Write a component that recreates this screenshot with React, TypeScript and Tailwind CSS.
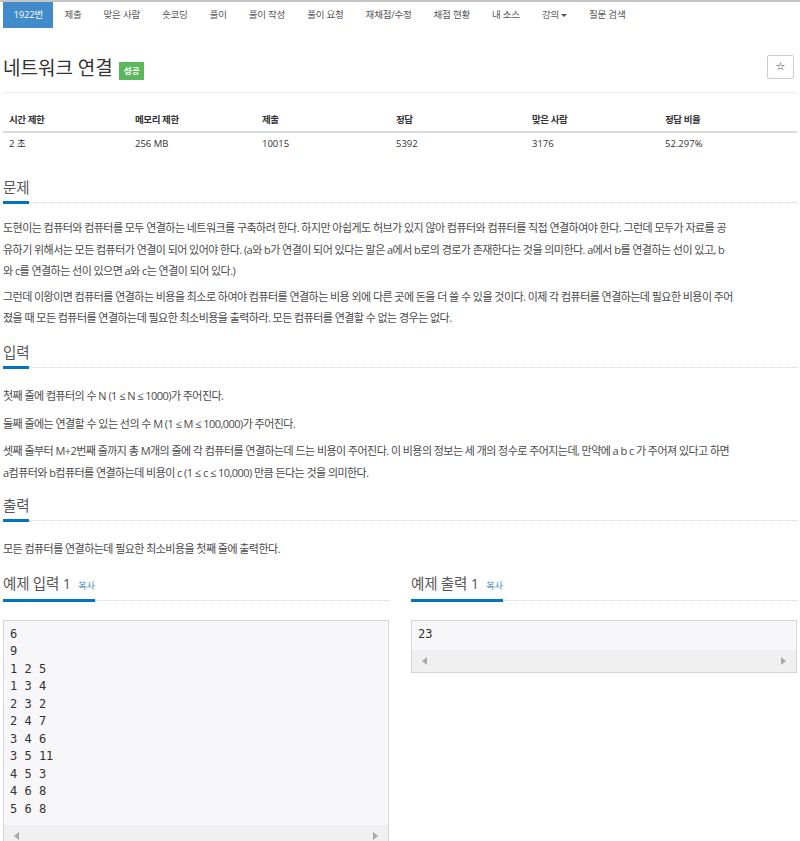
import type { ReactNode } from "react";

const navItems = ["제출", "맞은 사람", "숏코딩", "풀이", "풀이 작성", "풀이 요청", "재채점/수정", "채점 현황", "내 소스", "강의", "질문 검색"];

const stats = [
  { label: "시간 제한", value: "2 초", w: "w-[126px]" },
  { label: "메모리 제한", value: "256 MB", w: "w-[127px]" },
  { label: "제출", value: "10015", w: "w-[134px]" },
  { label: "정답", value: "5392", w: "w-[136px]" },
  { label: "맞은 사람", value: "3176", w: "w-[133px]" },
  { label: "정답 비율", value: "52.297%", w: "" },
];

const sampleInput = ["6", "9", "1 2 5", "1 3 4", "2 3 2", "2 4 7", "3 4 6", "3 5 11", "4 5 3", "4 6 8", "5 6 8"];
const sampleOutput = ["23"];

function Headline({ children, className = "" }: { children: ReactNode; className?: string }) {
  return (
    <div className={`flex items-end ${className}`}>
      <h2 className="border-b-[3px] border-[#0076c0] pb-[3px] text-[14.5px] leading-[20px] font-normal text-[#555] tracking-[-0.2px]">
        {children}
      </h2>
      <div className="flex-1 border-b border-dotted border-[#c9d3dc] mb-[1px]" />
    </div>
  );
}

function SampleBox({ lines }: { lines: string[] }) {
  return (
    <div className="border border-[#d5d5dc] bg-[#f7f7f9]">
      <pre className="px-[6px] pt-[5px] pb-[7px] font-['DejaVu_Sans_Mono',monospace] text-[12px] leading-[17.5px] text-[#333]">
        {lines.join("\n")}
      </pre>
      <div className="flex h-[22px] items-center justify-between bg-[#f0f0f0] px-[10px]">
        <svg width="5" height="8" viewBox="0 0 5 8">
          <path d="M5 0 L0 4 L5 8 Z" fill="#a8a8a8" />
        </svg>
        <svg width="5" height="8" viewBox="0 0 5 8">
          <path d="M0 0 L5 4 L0 8 Z" fill="#a8a8a8" />
        </svg>
      </div>
    </div>
  );
}

const bodyText = "text-[11px] leading-[21.6px] tracking-[-0.55px] text-[#4a4a4a]";

export default function App() {
  return (
    <div className="min-h-screen bg-white font-['Open_Sans','Noto_Sans_CJK_KR',sans-serif] text-[#333]">
      {/* problem menu */}
      <ul className="flex border-t-2 border-[#c4c4c4] pl-[3px] text-[9.5px] tracking-[-0.2px]">
        <li className="bg-[#428bca] px-[10.5px] leading-[26px] text-white">1922번</li>
        {navItems.map((item) => (
          <li key={item} className="flex items-center px-[11px] leading-[26px] text-[#555]">
            {item}
            {item === "강의" && (
              <span className="ml-[2px] inline-block h-0 w-0 border-x-[3px] border-t-[3px] border-x-transparent border-t-[#555]" />
            )}
          </li>
        ))}
      </ul>

      <div className="flex flex-col px-[3px]">
        {/* title */}
        <div className="flex items-start justify-between border-b border-[#eee] pt-[27px] pb-[12px]">
          <h1 className="mt-[1px] flex items-center text-[19px] leading-[24px] font-normal text-[#333]">
            네트워크 연결
            <span className="ml-[6px] mt-[5px] inline-flex h-[18px] items-center bg-[#5cb85c] px-[5px] text-[8.5px] font-bold text-white">
              성공
            </span>
          </h1>
          <button className="mr-[3px] flex h-[24px] w-[27px] items-center justify-center rounded-[2px] border border-[#ccc] bg-white text-[11px] text-[#333] font-['DejaVu_Sans',sans-serif]">
            ☆
          </button>
        </div>

        {/* limits table */}
        <table className="mt-[13px] w-full table-fixed text-left text-[9.5px]">
          <thead>
            <tr className="border-b-2 border-[#ddd]">
              {stats.map((s) => (
                <th key={s.label} className={`${s.w} px-[6px] pt-[7px] pb-[4px] leading-[14px] font-bold tracking-[-0.4px] text-[#333]`}>
                  {s.label}
                </th>
              ))}
            </tr>
          </thead>
          <tbody>
            <tr>
              {stats.map((s) => (
                <td key={s.label} className="px-[6px] pt-[4px] pb-[8px] leading-[14px] text-[#333]">
                  {s.value}
                </td>
              ))}
            </tr>
          </tbody>
        </table>

        {/* 문제 */}
        <Headline className="mt-[19px]">문제</Headline>
        <div className={`mt-[13px] ${bodyText}`}>
          <p className="mb-[4px]">
            도현이는 컴퓨터와 컴퓨터를 모두 연결하는 네트워크를 구축하려 한다. 하지만 아쉽게도 허브가 있지 않아 컴퓨터와 컴퓨터를 직접 연결하여야 한다. 그런데 모두가 자료를 공<br />
            유하기 위해서는 모든 컴퓨터가 연결이 되어 있어야 한다. (a와 b가 연결이 되어 있다는 말은 a에서 b로의 경로가 존재한다는 것을 의미한다. a에서 b를 연결하는 선이 있고, b<br />
            와 c를 연결하는 선이 있으면 a와 c는 연결이 되어 있다.)
          </p>
          <p className="mb-[4px]">
            그런데 이왕이면 컴퓨터를 연결하는 비용을 최소로 하여야 컴퓨터를 연결하는 비용 외에 다른 곳에 돈을 더 쓸 수 있을 것이다. 이제 각 컴퓨터를 연결하는데 필요한 비용이 주어<br />
            졌을 때 모든 컴퓨터를 연결하는데 필요한 최소비용을 출력하라. 모든 컴퓨터를 연결할 수 없는 경우는 없다.
          </p>
        </div>

        {/* 입력 */}
        <Headline className="mt-[10px]">입력</Headline>
        <div className={`mt-[16px] ${bodyText}`}>
          <p className="mb-[6px]">첫째 줄에 컴퓨터의 수 N (1 ≤ N ≤ 1000)가 주어진다.</p>
          <p className="mb-[6px]">둘째 줄에는 연결할 수 있는 선의 수 M (1 ≤ M ≤ 100,000)가 주어진다.</p>
          <p className="mb-[6px]">
            셋째 줄부터 M+2번째 줄까지 총 M개의 줄에 각 컴퓨터를 연결하는데 드는 비용이 주어진다. 이 비용의 정보는 세 개의 정수로 주어지는데, 만약에 a b c 가 주어져 있다고 하면<br />
            a컴퓨터와 b컴퓨터를 연결하는데 비용이 c (1 ≤ c ≤ 10,000) 만큼 든다는 것을 의미한다.
          </p>
        </div>

        {/* 출력 */}
        <Headline className="mt-[7px]">출력</Headline>
        <p className={`mt-[16px] mb-[6px] ${bodyText}`}>
          모든 컴퓨터를 연결하는데 필요한 최소비용을 첫째 줄에 출력한다.
        </p>

        {/* samples */}
        <div className="mt-[8px] grid grid-cols-2 gap-[22px]">
          <div>
            <Headline>
              예제 입력 1 <a className="ml-[4px] text-[9px] text-[#428bca]">복사</a>
            </Headline>
            <div className="mt-[18px]">
              <SampleBox lines={sampleInput} />
            </div>
          </div>
          <div>
            <Headline>
              예제 출력 1 <a className="ml-[4px] text-[9px] text-[#428bca]">복사</a>
            </Headline>
            <div className="mt-[18px]">
              <SampleBox lines={sampleOutput} />
            </div>
          </div>
        </div>
      </div>
    </div>
  );
}
